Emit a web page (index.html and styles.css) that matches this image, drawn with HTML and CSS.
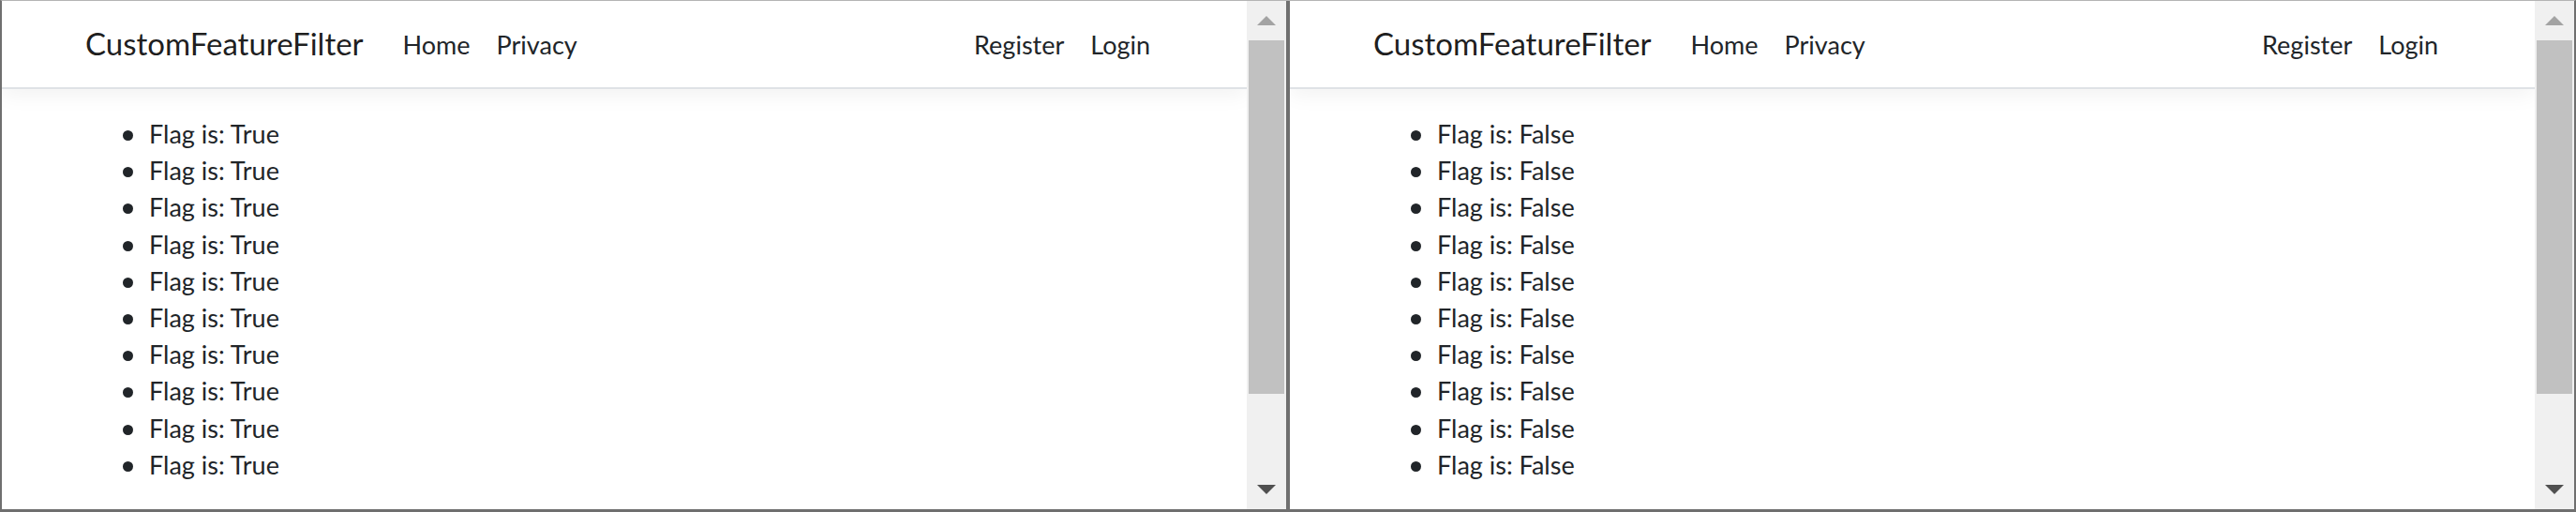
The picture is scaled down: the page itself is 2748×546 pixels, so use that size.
FILE: index.html
```html
<!DOCTYPE html>
<html lang="en">
<head>
<meta charset="utf-8">
<title>CustomFeatureFilter</title>
<link rel="stylesheet" href="styles.css">
</head>
<body>
<div class="screen">
  <section class="window">
    <div class="viewport">
      <header class="navbar">
        <div class="nav-inner">
          <a class="brand">CustomFeatureFilter</a>
          <ul class="nav-list nav-main">
            <li class="nav-link">Home</li>
            <li class="nav-link">Privacy</li>
          </ul>
          <ul class="nav-list nav-login">
            <li class="nav-link">Register</li>
            <li class="nav-link">Login</li>
          </ul>
        </div>
      </header>
      <main class="content">
        <ul class="flags">
          <li>Flag is: True</li>
          <li>Flag is: True</li>
          <li>Flag is: True</li>
          <li>Flag is: True</li>
          <li>Flag is: True</li>
          <li>Flag is: True</li>
          <li>Flag is: True</li>
          <li>Flag is: True</li>
          <li>Flag is: True</li>
          <li>Flag is: True</li>
        </ul>
      </main>
    </div>
    <div class="scrollbar">
      <div class="sb-btn sb-top"><span class="arrow-up"></span></div>
      <div class="sb-thumb"></div>
      <div class="sb-btn sb-bottom"><span class="arrow-down"></span></div>
    </div>
  </section>
  <div class="divider"></div>
  <section class="window">
    <div class="viewport">
      <header class="navbar">
        <div class="nav-inner">
          <a class="brand">CustomFeatureFilter</a>
          <ul class="nav-list nav-main">
            <li class="nav-link">Home</li>
            <li class="nav-link">Privacy</li>
          </ul>
          <ul class="nav-list nav-login">
            <li class="nav-link">Register</li>
            <li class="nav-link">Login</li>
          </ul>
        </div>
      </header>
      <main class="content">
        <ul class="flags">
          <li>Flag is: False</li>
          <li>Flag is: False</li>
          <li>Flag is: False</li>
          <li>Flag is: False</li>
          <li>Flag is: False</li>
          <li>Flag is: False</li>
          <li>Flag is: False</li>
          <li>Flag is: False</li>
          <li>Flag is: False</li>
          <li>Flag is: False</li>
        </ul>
      </main>
    </div>
    <div class="scrollbar">
      <div class="sb-btn sb-top"><span class="arrow-up"></span></div>
      <div class="sb-thumb"></div>
      <div class="sb-btn sb-bottom"><span class="arrow-down"></span></div>
    </div>
  </section>
</div>
</body>
</html>
```

FILE: styles.css
```css
html, body {
  margin: 0;
  padding: 0;
  background: #ffffff;
}

.screen {
  box-sizing: border-box;
  width: 2748px;
  height: 546px;
  display: flex;
  border-top: 1px solid #b4b4b4;
  border-left: 2px solid #6f6f6f;
  border-right: 2px solid #6f6f6f;
  border-bottom: 3px solid #6f6f6f;
  font-family: Lato, "Noto Sans", sans-serif;
  color: #212529;
  overflow: hidden;
}

.window {
  width: 1370px;
  display: flex;
  background: #ffffff;
}

.divider {
  width: 4px;
  background: #6f6f6f;
  flex: none;
}

.viewport {
  flex: 1;
  overflow: hidden;
  display: flex;
  flex-direction: column;
}

.navbar {
  height: 92px;
  border-bottom: 2px solid #dfe2e6;
  box-shadow: 0 7px 21px rgba(0, 0, 0, 0.05);
  background: #ffffff;
  flex: none;
}

.nav-inner {
  height: 100%;
  display: flex;
  align-items: center;
  padding: 0 89px;
}

.brand {
  font-size: 33px;
  line-height: 1;
  color: rgba(0, 0, 0, 0.9);
  margin-right: 28px;
  padding-bottom: 2px;
}

.nav-list {
  list-style: none;
  margin: 0;
  padding: 0;
  display: flex;
}

.nav-main {
  flex: 1;
}

.nav-link {
  font-size: 27px;
  line-height: 1;
  padding: 0 14px;
  color: #212529;
}

.content {
  padding: 0 89px;
}

.flags {
  list-style: none;
  margin: 28px 0 0 0;
  padding-left: 68px;
  font-size: 27px;
  line-height: 39.2px;
}

.flags li::before {
  content: "";
  display: inline-block;
  width: 11px;
  height: 11px;
  border-radius: 50%;
  background: #212529;
  margin-left: -28px;
  margin-right: 17px;
  vertical-align: 3px;
}

.scrollbar {
  width: 42px;
  flex: none;
  background: #f0f0f0;
  display: flex;
  flex-direction: column;
}

.sb-btn {
  display: flex;
  align-items: center;
  justify-content: center;
  flex: none;
}

.sb-top {
  height: 42px;
}

.sb-bottom {
  height: 42px;
  margin-top: auto;
}

.sb-thumb {
  height: 377px;
  margin: 0 2px;
  background: #c1c1c1;
  flex: none;
}

.arrow-up {
  width: 0;
  height: 0;
  border-left: 10px solid transparent;
  border-right: 10px solid transparent;
  border-bottom: 10px solid #a3a3a3;
}

.arrow-down {
  width: 0;
  height: 0;
  border-left: 10px solid transparent;
  border-right: 10px solid transparent;
  border-top: 10px solid #505050;
}
```
